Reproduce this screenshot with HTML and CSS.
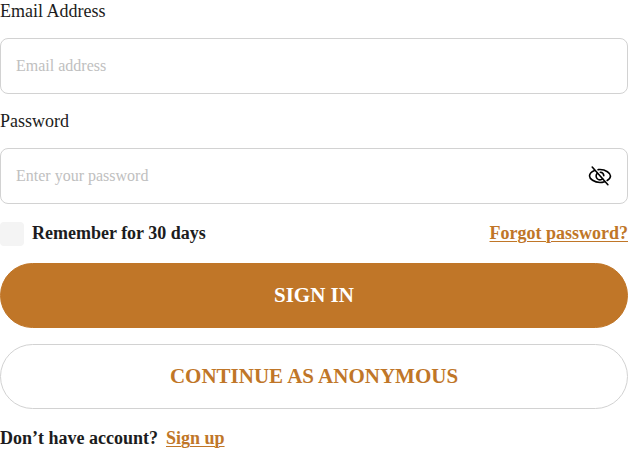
FILE: index.html
```html
<!DOCTYPE html>
<html lang="en">
<head>
<meta charset="utf-8">
<meta name="viewport" content="width=device-width, initial-scale=1">
<title>Sign in</title>
<link rel="stylesheet" href="styles.css">
</head>
<body>
<form class="form">
  <label class="label" for="email">Email Address</label>
  <div class="field">
    <input class="input" id="email" type="email" placeholder="Email address">
  </div>
  <label class="label" for="password">Password</label>
  <div class="field">
    <input class="input" id="password" type="password" placeholder="Enter your password">
    <button class="toggle" type="button" aria-label="Show password">
      <svg class="icon" viewBox="0 0 24 24" fill="none" stroke="currentColor" stroke-width="1.600" stroke-linecap="round" stroke-linejoin="round">
        <path d="M6.500 6.400C3.500 7.600 1.500 10.200 1.500 12c0 2.700 4.700 6.500 10.500 6.500 1.600 0 3.100-.3 4.500-.8"/>
        <path d="M10 5.700c.7-.1 1.300-.2 2-.2 5.800 0 10.500 3.800 10.500 6.500 0 1.500-1.300 3.200-3.300 4.500"/>
        <path d="M9.200 9.400A3.700 3.700 0 0 0 14.600 14.700"/>
        <path d="M12.300 8.300a3.700 3.700 0 0 1 3.500 3.500"/>
        <path d="M4.200 3l15.700 17.700"/>
      </svg>
    </button>
  </div>
  <div class="row">
    <label class="remember"><input class="check" type="checkbox">Remember for 30 days</label>
    <a class="link" href="#">Forgot password?</a>
  </div>
  <button class="button primary" type="submit">SIGN IN</button>
  <button class="button outline" type="button">CONTINUE AS ANONYMOUS</button>
  <p class="signup">Don’t have account? <a class="link" href="#">Sign up</a></p>
</form>
</body>
</html>
```
FILE: styles.css
```css
* {
  box-sizing: border-box;
}

body {
  margin: 0;
  background: #fff;
  color: #1c1c20;
  font-family: "Liberation Serif", serif;
}

.form {
  display: flex;
  flex-direction: column;
  gap: 16px;
}

.label {
  font-size: 18px;
  line-height: 22px;
}

.field {
  display: flex;
  align-items: center;
  height: 56px;
  padding: 0 15px;
  border: 1px solid #d2d2d2;
  border-radius: 8px;
}

.input {
  flex: 1;
  min-width: 0;
  padding: 0;
  border: 0;
  outline: 0;
  background: none;
  color: inherit;
  font: 16px/20px "Liberation Serif", serif;
}

.input::placeholder {
  color: #c0c0c0;
  opacity: 1;
}

.toggle {
  display: flex;
  padding: 0;
  border: 0;
  background: none;
  color: #000;
  cursor: pointer;
}

.icon {
  width: 24px;
  height: 24px;
}

.row,
.remember,
.signup {
  display: flex;
  align-items: center;
  gap: 8px;
  font-size: 18px;
  font-weight: 700;
  line-height: 27px;
}

.row {
  justify-content: space-between;
}

.check {
  appearance: none;
  width: 24px;
  height: 24px;
  margin: 0;
  border-radius: 4px;
  background: #f4f4f4;
}

.check:checked {
  background: #c07628;
}

.link {
  color: #c07628;
  text-decoration: underline;
  text-decoration-thickness: 1px;
  text-underline-offset: 2px;
}

.button {
  height: 65px;
  border: 1px solid #c07628;
  border-radius: 33px;
  font: 700 21px/27px "Liberation Serif", serif;
  cursor: pointer;
}

.primary {
  background: #c07628;
  color: #fff;
}

.outline {
  border-color: #d2d2d2;
  background: #fff;
  color: #c07628;
}

.signup {
  margin: 0;
}
```
